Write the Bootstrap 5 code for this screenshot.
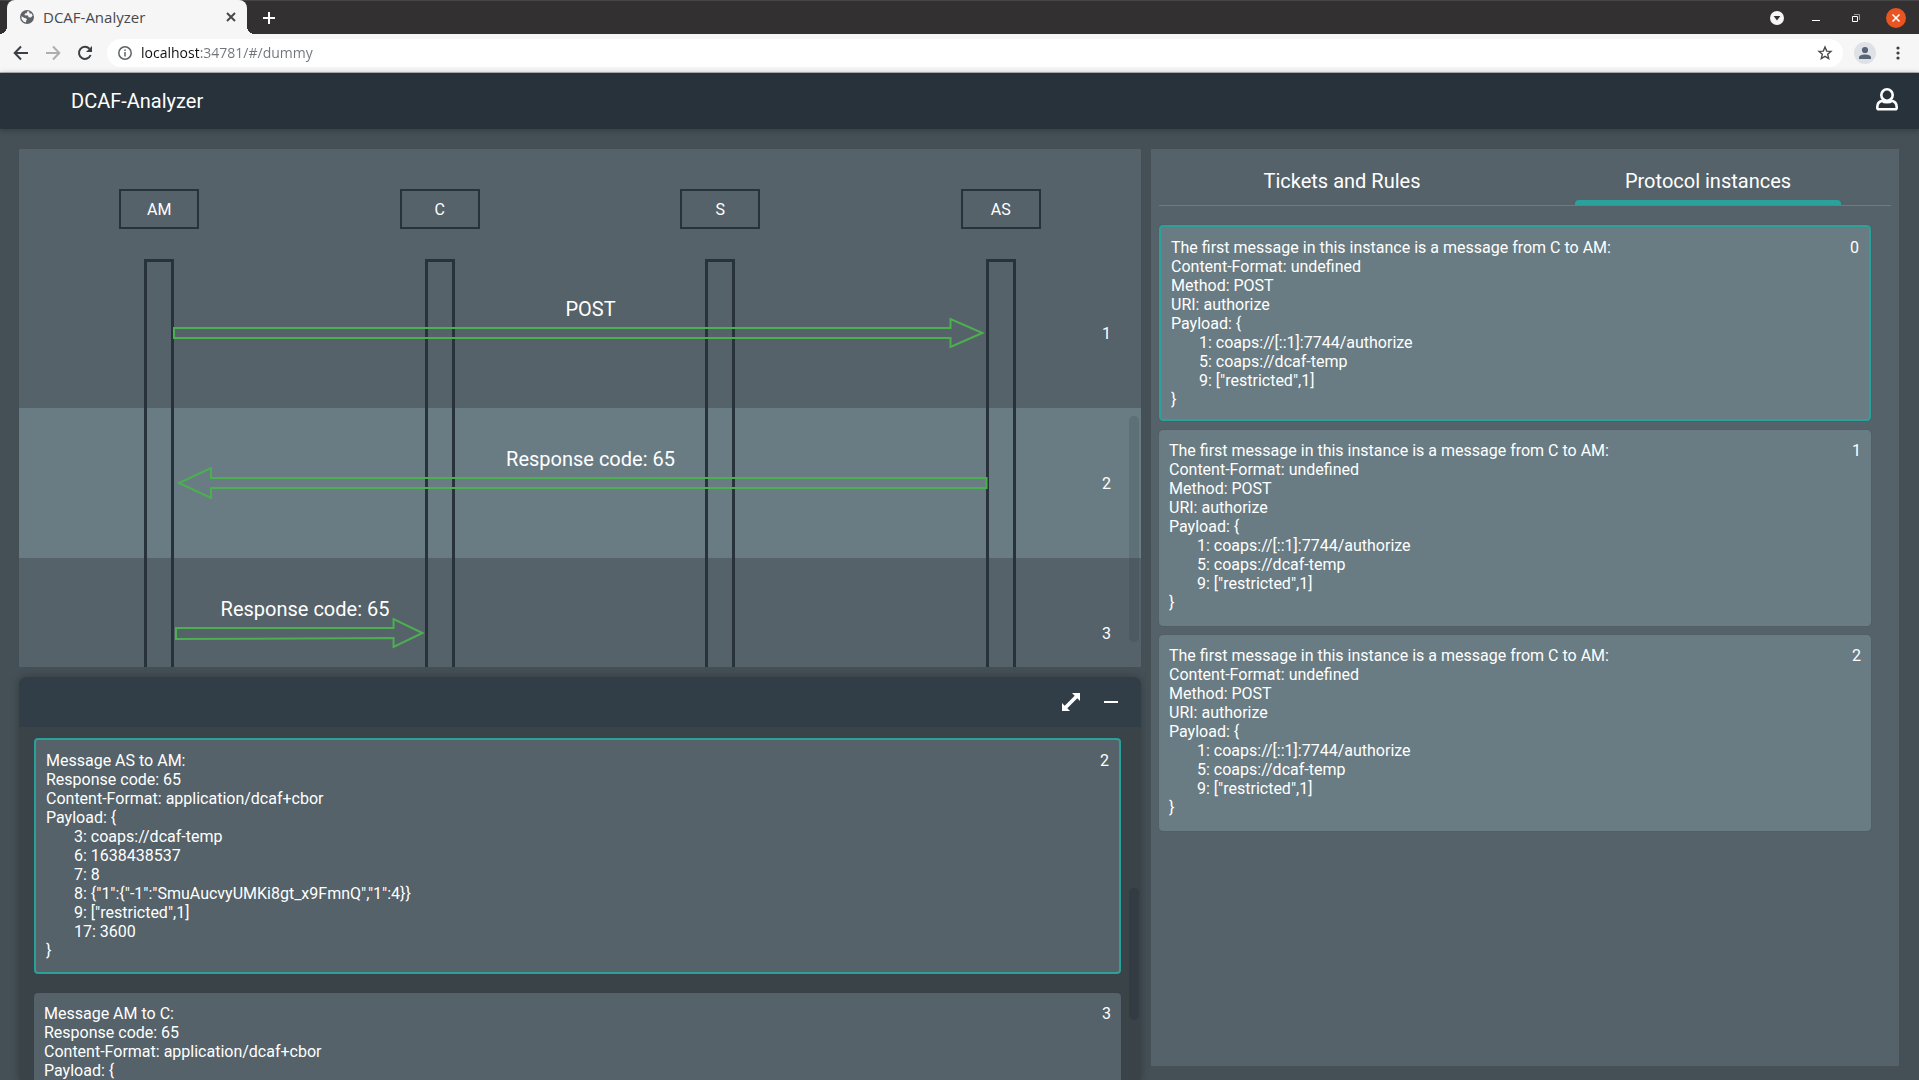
<!DOCTYPE html>
<html lang="en">
<head>
<meta charset="utf-8">
<meta name="viewport" content="width=device-width, initial-scale=1">
<title>DCAF-Analyzer</title>
<link rel="stylesheet" href="https://cdn.jsdelivr.net/npm/bootstrap@5.3.0/dist/css/bootstrap.min.css">
<style>
:root{--ink:#28323a;--page:#445056;--panel:#556269;--raised:#697c83;--teal:#2aa19a;--green:#4caf50}
html,body{height:100%}
body{font-family:Roboto,sans-serif;font-size:16px;line-height:19px;color:#fff;background:var(--page)}
svg{display:block;flex:none}
button{color:inherit}
.bare{border:0;background:none;padding:0}

/* browser window */
.tabstrip{height:34px;background:#333031;border-top:1px solid #474445;padding-left:7px;padding-right:13px}
.tab-open{position:relative;width:240px;height:34px;margin-top:-1px;background:#f6f6f6;border-radius:8px 8px 0 0;padding:0 10px 0 13px;color:#48494b}
.tab-open::before,.tab-open::after{content:"";position:absolute;bottom:0;width:8px;height:8px}
.tab-open::before{left:-8px;background:radial-gradient(circle at 0 0,transparent 8px,#f6f6f6 8px)}
.tab-open::after{right:-8px;background:radial-gradient(circle at 100% 0,transparent 8px,#f6f6f6 8px)}
.ui-font{font-family:"Open Sans","Noto Sans",sans-serif;font-size:14px;line-height:20px}
.tab-open .ui-font{font-size:15px;margin-left:9px}
.newtab{margin-left:16px}
.window-keys{gap:24px}
.window-keys .bare:last-child{margin-left:-2px}
.toolbar{height:39px;background:#f6f6f6;border-bottom:1px solid #b8b7b9;padding:0 13px 0 12px}
.nav-keys{gap:14px}
.omnibox{height:28px;background:#fff;border-radius:14px;margin:0 11px 0 13px;padding:0 10px 0 11px}
.omnibox input{border:0;outline:0;padding:0;margin-left:9px;color:transparent;background:linear-gradient(90deg,#111 58px,#70757a 58px);-webkit-background-clip:text;background-clip:text}

/* application bar */
.appbar{height:56px;background:var(--ink);padding:0 20px 0 71px;box-shadow:0 1px 6px rgba(0,0,0,.3);font-size:20px;line-height:24px}

/* workspace */
.workspace{display:grid;grid-template-columns:minmax(0,3fr) minmax(0,2fr);min-height:0;padding:20px 20px 0 19px;gap:10px}
.left-col{min-height:0;gap:10px}
.right-col{background:var(--panel);margin-bottom:14px;padding:0 8px;overflow:hidden}

.diagram{flex:518 1 0;min-height:0;background:var(--panel);overflow:hidden}
.actors{padding:40px 0 29px}
.actor{width:80px;height:40px;border:2px solid var(--ink)}
.lifelines{position:absolute;inset:110px 0 0 0;z-index:1}
.lifeline{width:30px;border:3px solid var(--ink);border-bottom:0}
.msg-row{height:150px}
.msg-row.active{background:var(--raised)}
.lane,.msg-no{position:relative;z-index:2}
.msg-no{margin-right:30px}
.lane{margin-left:calc(12.5% + 14px);padding-top:43px}
.lane-long{width:calc(75% - 27px)}
.lane-short{width:calc(25% - 27px)}
.lane svg{width:100%;height:32px;fill:none;stroke:var(--green);stroke-width:2}
.lane path{vector-effect:non-scaling-stroke}
.lane-text{font-size:20px;line-height:16px;padding-left:20px}
.lane-short .lane-text{padding-left:10px}
.thumb{position:absolute;right:2px;width:10px;border-radius:5px;background:rgba(40,50,58,.16);z-index:3}
.diagram .thumb{top:267px;height:226px}

.drawer{flex:403 1 0;min-height:0;background:#3a4348;border-radius:8px 8px 0 0;box-shadow:0 0 8px rgba(0,0,0,.25);overflow:hidden}
.drawer-head{height:50px;background:#313e47;padding-right:22px;gap:22px;flex:none}
.drawer-body{padding:11px 20px 0 15px}
.drawer .thumb{top:211px;height:132px;background:#343c43}

/* message cards */
.note{border-radius:4px;padding:11px 10px 14px;box-shadow:0 0 1px rgba(40,50,58,.5)}
.note.picked{border:2px solid var(--teal);padding-bottom:10px}
.note-dark{background:var(--panel)}
.note-dark.picked{padding-bottom:12px}
.note-light{background:var(--raised)}
.fields{padding-left:28px}
.drawer-body .note + .note{margin-top:19px}
.instances{padding:19px 20px 0 0}
.instances .note + .note{margin-top:9px}

/* side tabs */
.side-tabs{border-bottom:1px solid #707b7e;height:57px}
.side-tabs button{position:relative;font-size:20px;line-height:24px;padding-top:8px}
.side-tabs button.current::after{content:"";position:absolute;left:50px;right:50px;bottom:0;height:5px;border-radius:4px 4px 0 0;background:var(--teal)}
</style>
<script src="https://cdn.jsdelivr.net/npm/bootstrap@5.3.0/dist/js/bootstrap.bundle.min.js" defer></script>
</head>
<body class="d-flex flex-column overflow-hidden">

<div class="tabstrip d-flex align-items-center flex-shrink-0">
  <div class="tab-open d-flex align-items-center">
    <svg width="14" height="14" viewBox="0 0 14 14"><circle cx="7" cy="7" r="7" fill="#5f6368"/><path d="M7.4 1.2 6.6 3.2 4.8 3.6 4.6 5.2 8 5.4 8.6 7.2 11 7.6 12.6 5.6 11.6 3.4 9.6 3.6 9.2 1.6zM1.4 6.2 4.6 8 6 8.2 7 9.4 6.2 10.6 6 12.6 3.4 11.4 1.6 9z" fill="#f6f6f6"/></svg>
    <span class="ui-font">DCAF-Analyzer</span>
    <button class="bare ms-auto" aria-label="Close tab"><svg width="12" height="12" viewBox="0 0 12 12" stroke="#48494b" stroke-width="2"><path d="M2 2 10 10M10 2 2 10"/></svg></button>
  </div>
  <button class="bare newtab" aria-label="New tab"><svg width="12" height="12" viewBox="0 0 12 12" stroke="#fff" stroke-width="2"><path d="M6 0V12M0 6H12"/></svg></button>
  <div class="window-keys d-flex align-items-center ms-auto">
    <button class="bare" aria-label="Search tabs"><svg width="14" height="14" viewBox="0 0 14 14"><circle cx="7" cy="7" r="7" fill="#f6f6f6"/><path d="M3.6 5H10.400L7 9.400z" fill="#333031"/></svg></button>
    <button class="bare" aria-label="Minimize"><svg width="16" height="16" viewBox="0 0 16 16"><path d="M4 10H12V11H4z" fill="#fff"/></svg></button>
    <button class="bare" aria-label="Restore"><svg width="16" height="16" viewBox="0 0 16 16" fill="none"><path d="M6 4.500H11.500V10" stroke="#9a9899"/><path d="M4.500 6.500H9.500V11.500H4.500z" stroke="#fff"/></svg></button>
    <button class="bare" aria-label="Close window"><svg width="20" height="20" viewBox="0 0 20 20"><circle cx="10" cy="10" r="10" fill="#e95420"/><path d="M6.500 6.500 13.500 13.500M13.500 6.500 6.500 13.500" stroke="#fff" stroke-width="1.600"/></svg></button>
  </div>
</div>

<div class="toolbar d-flex align-items-center flex-shrink-0">
  <div class="nav-keys d-flex">
    <button class="bare" aria-label="Back"><svg width="18" height="18" viewBox="0 0 18 18" fill="none" stroke="#3c3f43" stroke-width="2"><path d="M16 9H3M9 2.500 2.700 9 9 15.500"/></svg></button>
    <button class="bare" aria-label="Forward"><svg width="18" height="18" viewBox="0 0 18 18" fill="none" stroke="#aeaeb0" stroke-width="2"><path d="M2 9H15M9 2.500 15.300 9 9 15.500"/></svg></button>
    <button class="bare" aria-label="Reload"><svg width="18" height="18" viewBox="0 0 18 18" fill="none" stroke="#3c3f43" stroke-width="2"><path d="M14.600 11A6 6 0 1 1 13.400 4.800"/><path d="M16 2V8H10z" fill="#3c3f43" stroke="none"/></svg></button>
  </div>
  <div class="omnibox d-flex align-items-center flex-fill">
    <svg width="14" height="14" viewBox="0 0 14 14" fill="none" stroke="#5f6368" stroke-width="1.500"><circle cx="7" cy="7" r="6.200"/><path d="M7 6V10.500M7 3.500V5"/></svg>
    <input class="ui-font flex-fill" type="text" aria-label="Address" value="localhost:34781/#/dummy">
    <button class="bare" aria-label="Bookmark"><svg width="16" height="16" viewBox="0 0 16 16" fill="none" stroke="#48494b" stroke-width="1.400"><path d="M8 2 9.700 6.100 14 6.400 10.700 9.300 11.700 13.600 8 11.300 4.300 13.600 5.300 9.300 2 6.400 6.300 6.100z"/></svg></button>
  </div>
  <button class="bare" aria-label="Profile"><svg width="22" height="22" viewBox="0 0 22 22"><circle cx="11" cy="11" r="11" fill="#dee1e6"/><g fill="#5a6478"><circle cx="11" cy="8" r="3.100"/><path d="M5 17V15.500C5 13.300 8.500 12.500 11 12.500S17 13.300 17 15.500V17z"/></g></svg></button>
  <button class="bare ms-3" aria-label="Menu"><svg width="14" height="16" viewBox="0 0 14 16" fill="#3c3f43"><circle cx="6" cy="3" r="1.600"/><circle cx="6" cy="8" r="1.600"/><circle cx="6" cy="13" r="1.600"/></svg></button>
</div>

<header class="appbar d-flex align-items-center justify-content-between flex-shrink-0">
  <a class="text-white text-decoration-none" href="#">DCAF-Analyzer</a>
  <button class="bare" aria-label="Account"><svg width="24" height="30" viewBox="0 0 24 30" fill="none" stroke="#fff" stroke-width="2.600"><circle cx="12" cy="9" r="5.700"/><path d="M7.200 14.800C4 15.600 2.300 18 2.300 21V21.700Q2.300 23.200 3.800 23.200H20.200Q21.700 23.200 21.700 21.700V21C21.700 18 20 15.600 16.800 14.800C15 16.800 9 16.800 7.200 14.800z"/></svg></button>
</header>

<main class="workspace flex-fill">
  <div class="left-col d-flex flex-column">
    <section class="diagram position-relative" aria-label="Message sequence">
      <div class="actors row g-0">
        <div class="col-3 d-flex justify-content-center"><div class="actor d-flex align-items-center justify-content-center">AM</div></div>
        <div class="col-3 d-flex justify-content-center"><div class="actor d-flex align-items-center justify-content-center">C</div></div>
        <div class="col-3 d-flex justify-content-center"><div class="actor d-flex align-items-center justify-content-center">S</div></div>
        <div class="col-3 d-flex justify-content-center"><div class="actor d-flex align-items-center justify-content-center">AS</div></div>
      </div>
      <div class="lifelines row g-0">
        <div class="col-3 d-flex justify-content-center"><div class="lifeline"></div></div>
        <div class="col-3 d-flex justify-content-center"><div class="lifeline"></div></div>
        <div class="col-3 d-flex justify-content-center"><div class="lifeline"></div></div>
        <div class="col-3 d-flex justify-content-center"><div class="lifeline"></div></div>
      </div>
      <div class="msg-row d-flex justify-content-between">
        <div class="lane lane-long">
          <div class="lane-text text-center">POST</div>
          <svg viewBox="0 0 814 32" preserveAspectRatio="none"><path d="M1 11H777V2L809 16 777 30V21H1z"/></svg>
        </div>
        <div class="msg-no align-self-center">1</div>
      </div>
      <div class="msg-row active d-flex justify-content-between">
        <div class="lane lane-long">
          <div class="lane-text text-center">Response code: 65</div>
          <svg viewBox="0 0 814 32" preserveAspectRatio="none"><path d="M813 11H38V1L6 16 38 31V21H813z"/></svg>
        </div>
        <div class="msg-no align-self-center">2</div>
      </div>
      <div class="msg-row d-flex justify-content-between">
        <div class="lane lane-short">
          <div class="lane-text text-center">Response code: 65</div>
          <svg viewBox="0 0 254 32" preserveAspectRatio="none"><path d="M3 11H221V2L250 16 221 30V21L3 22z"/></svg>
        </div>
        <div class="msg-no align-self-center">3</div>
      </div>
      <div class="thumb"></div>
    </section>

    <section class="drawer position-relative d-flex flex-column" aria-label="Messages">
      <div class="drawer-head d-flex align-items-center justify-content-end">
        <button class="bare" aria-label="Expand"><svg width="20" height="20" viewBox="0 0 20 20"><path d="M11 1H19V9L16.300 6.300 6.300 16.300 9 19H1V11L3.700 13.700 13.700 3.700z" fill="#fff"/></svg></button>
        <button class="bare" aria-label="Collapse"><svg width="16" height="20" viewBox="0 0 16 20"><path d="M1 9H15V11H1z" fill="#fff"/></svg></button>
      </div>
      <div class="drawer-body">
        <article class="note note-dark picked d-flex justify-content-between">
          <div>
            <div>Message AS to AM:</div>
            <div>Response code: 65</div>
            <div>Content-Format: application/dcaf+cbor</div>
            <div>Payload: {</div>
            <div class="fields">
              <div>3: coaps://dcaf-temp</div>
              <div>6: 1638438537</div>
              <div>7: 8</div>
              <div>8: {"1":{"-1":"SmuAucvyUMKi8gt_x9FmnQ","1":4}}</div>
              <div>9: ["restricted",1]</div>
              <div>17: 3600</div>
            </div>
            <div>}</div>
          </div>
          <div>2</div>
        </article>
        <article class="note note-dark d-flex justify-content-between">
          <div>
            <div>Message AM to C:</div>
            <div>Response code: 65</div>
            <div>Content-Format: application/dcaf+cbor</div>
            <div>Payload: {</div>
          </div>
          <div>3</div>
        </article>
      </div>
      <div class="thumb"></div>
    </section>
  </div>

  <section class="right-col">
    <div class="side-tabs d-flex" role="tablist">
      <button class="bare flex-fill w-50" type="button" role="tab" aria-selected="false">Tickets and Rules</button>
      <button class="bare flex-fill w-50 current" type="button" role="tab" aria-selected="true">Protocol instances</button>
    </div>
    <div class="instances">
      <article class="note note-light picked d-flex justify-content-between">
        <div>
          <div>The first message in this instance is a message from C to AM:</div>
          <div>Content-Format: undefined</div>
          <div>Method: POST</div>
          <div>URI: authorize</div>
          <div>Payload: {</div>
          <div class="fields">
            <div>1: coaps://[::1]:7744/authorize</div>
            <div>5: coaps://dcaf-temp</div>
            <div>9: ["restricted",1]</div>
          </div>
          <div>}</div>
        </div>
        <div>0</div>
      </article>
      <article class="note note-light d-flex justify-content-between">
        <div>
          <div>The first message in this instance is a message from C to AM:</div>
          <div>Content-Format: undefined</div>
          <div>Method: POST</div>
          <div>URI: authorize</div>
          <div>Payload: {</div>
          <div class="fields">
            <div>1: coaps://[::1]:7744/authorize</div>
            <div>5: coaps://dcaf-temp</div>
            <div>9: ["restricted",1]</div>
          </div>
          <div>}</div>
        </div>
        <div>1</div>
      </article>
      <article class="note note-light d-flex justify-content-between">
        <div>
          <div>The first message in this instance is a message from C to AM:</div>
          <div>Content-Format: undefined</div>
          <div>Method: POST</div>
          <div>URI: authorize</div>
          <div>Payload: {</div>
          <div class="fields">
            <div>1: coaps://[::1]:7744/authorize</div>
            <div>5: coaps://dcaf-temp</div>
            <div>9: ["restricted",1]</div>
          </div>
          <div>}</div>
        </div>
        <div>2</div>
      </article>
    </div>
  </section>
</main>
</body>
</html>
